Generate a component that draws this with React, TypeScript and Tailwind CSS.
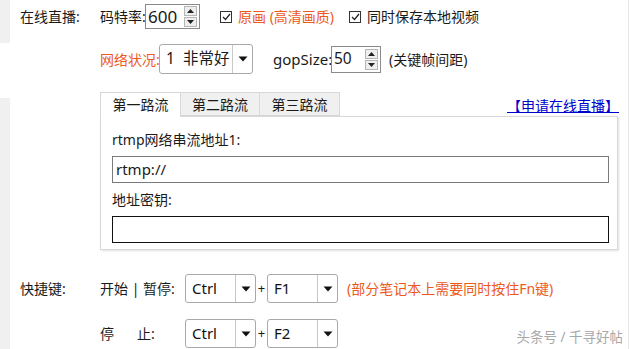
import React from 'react';

const font = { fontFamily: '"Noto Sans", "Noto Sans CJK SC", sans-serif' };

const Caret = () => (
  <svg width="10" height="6" viewBox="0 0 10 6">
    <path d="M0.5 0.5 L9.5 0.5 L5 5.5 Z" fill="#111" />
  </svg>
);

const Spinner = () => (
  <div className="flex flex-col gap-[1px] shrink-0">
    <div className="w-[13px] h-[10px] border border-[#b5b5b5] bg-[#eeeeee] flex items-center justify-center">
      <svg width="7" height="4" viewBox="0 0 7 4"><path d="M0 4 L3.5 0 L7 4 Z" fill="#222" /></svg>
    </div>
    <div className="w-[13px] h-[10px] border border-[#b5b5b5] bg-[#eeeeee] flex items-center justify-center">
      <svg width="7" height="4" viewBox="0 0 7 4"><path d="M0 0 L3.5 4 L7 0 Z" fill="#222" /></svg>
    </div>
  </div>
);

const Check = () => (
  <span className="w-[12px] h-[12px] border border-[#333] bg-white flex items-center justify-center shrink-0">
    <svg width="9" height="8" viewBox="0 0 9 8">
      <path d="M1 4 L3.5 6.5 L8 1" stroke="#222" strokeWidth="1.2" fill="none" />
    </svg>
  </span>
);

const Combo = ({ value }: { value: string }) => (
  <div className="w-[71px] h-[29px] border border-[#a9a9a9] rounded-[3px] flex items-center bg-white shrink-0">
    <span className="flex-1 pl-[6px] text-[15px] text-[#111]">{value}</span>
    <div className="w-[20px] h-full border-l border-[#c8c8c8] flex items-center justify-center">
      <Caret />
    </div>
  </div>
);

export default function App() {
  return (
    <div className="w-[631px] h-[349px] bg-white flex overflow-hidden relative text-[14px] text-[#1a1a1a] whitespace-nowrap" style={font}>
      {/* left strip */}
      <div className="w-[10px] flex flex-col shrink-0">
        <div className="h-[43px] bg-[#f0f0f0]" />
        <div className="h-[55px] bg-white" />
        <div className="flex-1 bg-[#f0f0f0]" />
      </div>

      <div className="flex-1 pl-[10px] flex flex-col">
        {/* row 1 */}
        <div className="flex items-center h-[25px] mt-[4px]">
          <span className="w-[80px] shrink-0">在线直播:</span>
          <span className="w-[45px] shrink-0">码特率:</span>
          <div className="w-[55px] h-[25px] border border-[#8a8a8a] flex items-center justify-between pl-[2px] pr-[2px] shrink-0">
            <span className="text-[17px] leading-none">600</span>
            <Spinner />
          </div>
          <span className="ml-[20px] flex items-center gap-[6px]">
            <Check />
            <span className="text-[#ec5a1c]">原画 (高清画质)</span>
          </span>
          <span className="ml-[15px] flex items-center gap-[6px]">
            <Check />
            <span>同时保存本地视频</span>
          </span>
        </div>

        {/* row 2 */}
        <div className="flex items-center h-[30px] mt-[15px]">
          <span className="w-[80px] shrink-0" />
          <span className="w-[59px] shrink-0 text-[#ec5a1c]">网络状况:</span>
          <div className="w-[94px] h-[30px] border border-[#a9a9a9] rounded-[3px] flex items-center shrink-0">
            <span className="flex-1 pl-[6px] text-[15.5px]">1&nbsp;&nbsp;非常好</span>
            <div className="w-[20px] h-full border-l border-[#c8c8c8] flex items-center justify-center">
              <Caret />
            </div>
          </div>
          <span className="ml-[20px] w-[58px] shrink-0 text-[15px]">gopSize:</span>
          <div className="w-[50px] h-[27px] border border-[#8a8a8a] flex items-center justify-between pl-[2px] pr-[2px] shrink-0">
            <span className="text-[15.5px] leading-none">50</span>
            <Spinner />
          </div>
          <span className="ml-[8px]">(关键帧间距)</span>
        </div>

        {/* tabs + panel */}
        <div className="ml-[80px] mt-[17px] w-[518px] flex flex-col">
          <div className="flex items-end h-[25px]">
            <div className="w-[81px] h-[25px] border border-b-0 border-[#d8d8d8] bg-white flex items-center justify-center relative z-10 -mb-[1px] pb-[1px]">第一路流</div>
            <div className="w-[79px] h-[24px] border border-l-0 border-[#d8d8d8] bg-[#f0f0f0] flex items-center justify-center">第二路流</div>
            <div className="w-[80px] h-[24px] border border-l-0 border-[#d8d8d8] bg-[#f0f0f0] flex items-center justify-center">第三路流</div>
            <div className="flex-1 flex justify-end items-center self-start h-[22px] mt-[3px]">
              <span className="text-[#0000cc] underline text-[14px] -mr-[1px]">【申请在线直播】</span>
            </div>
          </div>
          <div className="h-[134px] border border-[#d8d8d8] shadow-[1px_1px_2px_rgba(0,0,0,0.12)] pl-[11px] pr-[10px] flex flex-col">
            <span className="mt-[12px] text-[14px]">rtmp网络串流地址1:</span>
            <div className="mt-[6px] w-[497px] h-[27px] border border-[#7a7a7a] flex items-center pl-[3px] text-[15px]">rtmp://</div>
            <span className="mt-[6px]">地址密钥:</span>
            <div className="mt-[6px] w-[497px] h-[27px] border border-[#111]" />
          </div>
        </div>

        {/* shortcut rows */}
        <div className="flex items-center h-[29px] mt-[24px]">
          <span className="w-[80px] shrink-0">快捷键:</span>
          <span className="w-[85px] shrink-0">开始 | 暂停:</span>
          <Combo value="Ctrl" />
          <span className="w-[11px] text-center text-[13px] shrink-0">+</span>
          <Combo value="F1" />
          <span className="ml-[9px] text-[#ec5a1c]">(部分笔记本上需要同时按住Fn键)</span>
        </div>
        <div className="flex items-center h-[29px] mt-[16px]">
          <span className="w-[80px] shrink-0" />
          <span className="w-[85px] shrink-0 flex">
            <span className="w-[37px]">停</span>
            <span>止:</span>
          </span>
          <Combo value="Ctrl" />
          <span className="w-[11px] text-center text-[13px] shrink-0">+</span>
          <Combo value="F2" />
        </div>
      </div>

      {/* right edge line */}
      <div className="w-[1px] bg-[#e6e6e6] mr-[2px] shrink-0" />

      <span className="absolute right-[8px] bottom-[2px] text-[13.5px] text-[#a8a8a8]">头条号 / 千寻好帖</span>
    </div>
  );
}
